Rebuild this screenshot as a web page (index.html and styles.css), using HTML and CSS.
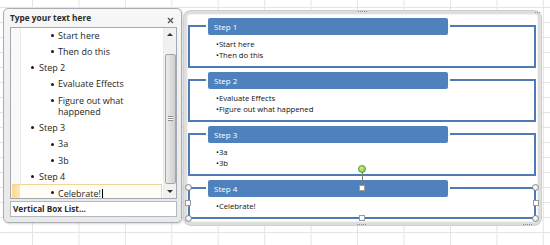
FILE: index.html
```html
<!DOCTYPE html>
<html lang="en">
<head>
    <link rel="stylesheet" href="styles.css">
</head>
<body>
    <div class="sheet">
        <!-- text pane -->
        <div class="pane">
            <div class="pane-head">
                <span class="pane-title">Type your text here</span>
                <svg class="pane-close" width="7" height="7" viewBox="0 0 7 7"><path d="M1 1L6 6M6 1L1 6" stroke="#555" stroke-width="1.3"/></svg>
            </div>
            <div class="pane-list">
                <ul class="outline">
                    <li class="lvl2">Start here</li>
                    <li class="lvl2">Then do this</li>
                    <li class="lvl1">Step 2</li>
                    <li class="lvl2">Evaluate Effects</li>
                    <li class="lvl2">Figure out what happened</li>
                    <li class="lvl1">Step 3</li>
                    <li class="lvl2">3a</li>
                    <li class="lvl2">3b</li>
                    <li class="lvl1">Step 4</li>
                    <li class="lvl2 current">Celebrate!<span class="caret"></span></li>
                </ul>
                <div class="scrollbar">
                    <div class="scroll-btn"><span class="arrow-up"></span></div>
                    <div class="scroll-track"><div class="scroll-thumb"><span class="grip"></span></div></div>
                    <div class="scroll-btn"><span class="arrow-down"></span></div>
                </div>
            </div>
            <div class="pane-foot">Vertical Box List...</div>
        </div>

        <!-- smartart canvas -->
        <div class="canvas">
            <span class="dots dots-top"></span>
            <span class="dots dots-corner"></span>
            <span class="dots dots-bottom"></span>
            <span class="dots dots-br"></span>

            <div class="step">
                <div class="step-title">Step 1</div>
                <ul class="step-text">
                    <li>Start here</li>
                    <li>Then do this</li>
                </ul>
            </div>
            <div class="step">
                <div class="step-title">Step 2</div>
                <ul class="step-text">
                    <li>Evaluate Effects</li>
                    <li>Figure out what happened</li>
                </ul>
            </div>
            <div class="step">
                <div class="step-title">Step 3</div>
                <ul class="step-text">
                    <li>3a</li>
                    <li>3b</li>
                </ul>
            </div>
            <div class="step selected">
                <div class="step-title">Step 4</div>
                <ul class="step-text">
                    <li>Celebrate!</li>
                </ul>
                <span class="rotate-line"></span>
                <span class="rotate"></span>
                <span class="handle round tl"></span>
                <span class="handle round tr"></span>
                <span class="handle round bl"></span>
                <span class="handle round br"></span>
                <span class="handle sq ml"></span>
                <span class="handle sq mr"></span>
                <span class="handle sq mt"></span>
                <span class="handle sq mb"></span>
            </div>
        </div>
    </div>
</body>
</html>
```

FILE: styles.css
```css
* {
    margin: 0;
    padding: 0;
    box-sizing: border-box;
}
html, body {
    width: 550px;
    height: 245px;
    overflow: hidden;
}
body {
    background-color: #fff;
    background-image:
        linear-gradient(to right, #e2e4e8 1px, transparent 1px),
        linear-gradient(to bottom, #e2e4e8 1px, transparent 1px);
    background-size: 46.44px 100%, 100% 15px;
    background-position: 32px 0, 0 7px;
    font-family: "Open Sans", sans-serif;
    color: #1e1e1e;
}
.sheet {
    display: flex;
    align-items: flex-start;
    gap: 2px;
    padding: 8px 0 0 3px;
}

/* ---------- text pane ---------- */
.pane {
    width: 179px;
    height: 215px;
    border: 1px solid #a9aeb5;
    border-radius: 5px;
    background: linear-gradient(#f7f7f7, #eeeeee 40%, #e9e9e9);
    box-shadow: 1px 1px 2px rgba(0, 0, 0, 0.15);
    display: flex;
    flex-direction: column;
    padding: 0 4px 5px 6px;
}
.pane-head {
    height: 18px;
    display: flex;
    justify-content: space-between;
    align-items: center;
    padding: 0 3px 1px 0;
}
.pane-title {
    font-size: 8.3px;
    font-weight: bold;
    color: #2b2b2b;
}
.pane-close {
    margin-top: 6px;
}
.pane-list {
    height: 173px;
    border: 1px solid #a3a9b2;
    background: #fff;
    display: flex;
    overflow: hidden;
}
.outline {
    list-style: none;
    flex: 1;
    margin-top: -1px;
    padding-right: 1px;
    background: linear-gradient(to right, #f9f9f9 9px, #ebebeb 9px, #ebebeb 10px, transparent 10px);
    font-size: 9px;
    line-height: 11px;
}
.outline li {
    position: relative;
    padding: 2.7px 4px 2.6px 0;
}
.outline li::before {
    content: "";
    position: absolute;
    top: 7px;
    width: 3px;
    height: 3px;
    border-radius: 50%;
    background: #1a1a1a;
}
.outline .lvl1 {
    padding-left: 28px;
}
.outline .lvl1::before {
    left: 20px;
}
.outline .lvl2 {
    padding-left: 47px;
}
.outline .lvl2::before {
    left: 40px;
}
.outline .current {
    margin-left: 1px;
    padding-left: 46px;
    border: 1px solid #f2d59c;
    border-width: 1px 1px 1px 0;
    background: linear-gradient(to right, #fbd98a, #fde8b4 8px, #fffdf5 8px);
}
.outline .current::before {
    left: 39px;
    top: 6px;
}
.caret {
    display: inline-block;
    width: 1px;
    height: 10px;
    margin-left: 1px;
    background: #000;
    vertical-align: -2px;
}
.scrollbar {
    width: 13px;
    display: flex;
    flex-direction: column;
    background: #f1f1f1;
    border-left: 1px solid #ececec;
}
.scroll-btn {
    height: 14px;
    display: flex;
    align-items: center;
    justify-content: center;
}
.arrow-up, .arrow-down {
    width: 0;
    height: 0;
    border-left: 3px solid transparent;
    border-right: 3px solid transparent;
}
.arrow-up {
    border-bottom: 3px solid #333;
}
.arrow-down {
    border-top: 3px solid #333;
}
.scroll-track {
    flex: 1;
    padding: 13px 0 1px 1px;
}
.scroll-thumb {
    height: 130px;
    width: 11px;
    border: 1px solid #a6a6a6;
    border-radius: 2px;
    background: linear-gradient(to right, #ececec, #dadada 60%, #cfcfcf);
    display: flex;
    align-items: center;
    justify-content: center;
}
.grip {
    width: 5px;
    height: 5px;
    border-top: 1px solid #8c8c8c;
    border-bottom: 1px solid #8c8c8c;
    background: linear-gradient(#fff 1px, #8c8c8c 1px, #8c8c8c 2px, #fff 2px);
}
.pane-foot {
    margin-top: 2px;
    height: 16px;
    border: 1px solid #b3b8bf;
    background: #fff;
    font-size: 8.2px;
    font-weight: bold;
    line-height: 14px;
    padding-left: 2px;
    color: #2b2b2b;
}

/* ---------- smartart canvas ---------- */
.canvas {
    position: relative;
    margin-top: 3px;
    width: 357px;
    height: 214px;
    border: 3px solid #dedede;
    border-radius: 7px;
    box-shadow: inset 0 0 0 1px #f4f4f4, 0 0 0 1px #cfcfcf;
    background: #fff;
    padding: 11px 2px 0 1px;
    display: flex;
    flex-direction: column;
    gap: 11px;
}
.dots {
    position: absolute;
    height: 1px;
    border-top: 1px dotted #8e8e8e;
}
.dots-top {
    top: -3px;
    left: 171px;
    width: 9px;
}
.dots-bottom {
    bottom: -3px;
    left: 170px;
    width: 9px;
}
.dots-corner {
    top: -2px;
    right: -2px;
    width: 5px;
}
.dots-br {
    bottom: -3px;
    right: 6px;
    width: 9px;
}
.step {
    position: relative;
    height: 43px;
    border: 2px solid #4e7bb7;
}
.step.selected {
    height: 32px;
}
.step-title {
    margin: -11px 0 0 16px;
    width: 244px;
    height: 21px;
    border: 2px solid #fff;
    border-radius: 4px;
    background: #4f81bd;
    color: #fff;
    font-size: 8px;
    line-height: 17px;
    padding-left: 6px;
}
.step-text {
    list-style: none;
    padding: 2px 0 0 26px;
    font-size: 7.7px;
    line-height: 11px;
    color: #111;
}
.step-text li::before {
    content: "\2022";
}

/* selection handles */
.handle {
    position: absolute;
    background: #fafafa;
    border: 1px solid #8a8a8a;
}
.handle.round {
    width: 7px;
    height: 7px;
    border-radius: 50%;
    background: radial-gradient(circle at 40% 35%, #fff, #d6dbe2);
}
.handle.sq {
    width: 6px;
    height: 6px;
    background: #fff;
    border-color: #9a9a9a;
}
.tl { top: -5px; left: -5px; }
.tr { top: -5px; right: -5px; }
.bl { bottom: -5px; left: -5px; }
.br { bottom: -5px; right: -5px; }
.ml { top: calc(50% - 3px); left: -5px; }
.mr { top: calc(50% - 3px); right: -5px; }
.mt { top: -4px; left: calc(50% - 3px); }
.mb { bottom: -4px; left: calc(50% - 3px); }
.rotate {
    position: absolute;
    top: -24px;
    left: calc(50% - 4px);
    width: 8px;
    height: 8px;
    border-radius: 50%;
    border: 1px solid #5c9a2c;
    background: radial-gradient(circle at 40% 35%, #c9f08f, #7cc23b);
}
.rotate-line {
    position: absolute;
    top: -17px;
    left: 50%;
    width: 1px;
    height: 14px;
    background: #7a7a7a;
}
```
